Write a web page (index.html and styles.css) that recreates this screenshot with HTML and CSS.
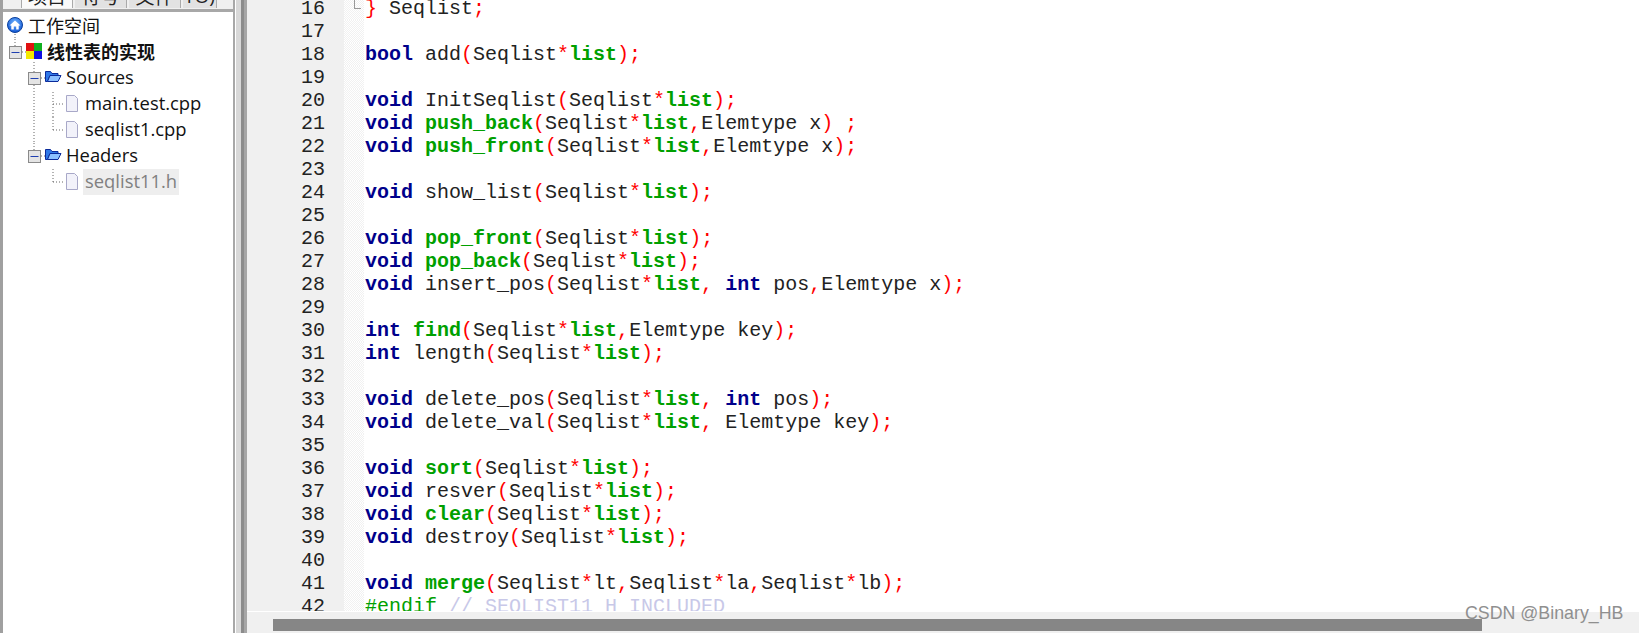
FILE: index.html
```html
<!DOCTYPE html>
<html lang="zh">
<head>
<meta charset="utf-8">
<title>线性表的实现</title>
<link rel="stylesheet" href="styles.css">
</head>
<body>
<div class="app">
  <aside class="side">
    <div class="tabs">
      <span class="tab on">项目</span>
      <span class="tab">符号</span>
      <span class="tab">文件</span>
      <span class="tab last">TO)</span>
    </div>
    <div class="tree">
      <div class="row">
        <svg class="tw w1" viewBox="0 0 28 26">
          <defs>
            <radialGradient id="globe" cx="0.500" cy="0.350" r="0.700">
              <stop offset="0" stop-color="#6fb4ff"/>
              <stop offset="1" stop-color="#0a4fd0"/>
            </radialGradient>
          </defs>
          <circle cx="15" cy="12" r="7.500" fill="url(#globe)" stroke="#0b3f9c"/>
          <path d="M9.500 12.500 15 7.500l5.500 5h-1.800v4h-2.500v-3h-2.400v3h-2.500v-4z" fill="#fff"/>
          <path class="dot" d="M15 21v5"/>
        </svg>
        <span class="lb">工作空间</span>
      </div>
      <div class="row">
        <svg class="tw w2" viewBox="0 0 47 26">
          <path class="dot" d="M15 0v7M22 13h4M34 23v3"/>
          <rect class="box" x="9.500" y="7.500" width="12" height="12"/><path class="minus" d="M11.500 13.500h8"/>
          <rect x="26" y="4" width="8" height="8" fill="#e01010"/><rect x="34" y="4" width="8" height="8" fill="#10b020"/>
          <rect x="26" y="12" width="8" height="8" fill="#f4e800"/><rect x="34" y="12" width="8" height="8" fill="#1010e0"/>
        </svg>
        <span class="lb bold">线性表的实现</span>
      </div>
      <div class="row">
        <svg class="tw w3" viewBox="0 0 66 26">
          <path class="dot" d="M34 0v7M34 20v6M41 13h4"/>
          <rect class="box" x="28.500" y="7.500" width="12" height="12"/><path class="minus" d="M30.500 13.500h8"/>
          <path class="fldb" d="M45.500 16.500v-10h5l1.500 2h6v2h-8l-2.500 6z"/>
          <path class="fld" d="M47.500 16.500l2.500-6h11l-3 6z"/>
        </svg>
        <span class="lb en">Sources</span>
      </div>
      <div class="row">
        <svg class="tw w4" viewBox="0 0 85 26">
          <path class="dot" d="M34 0v26M53 1v25M53 13h11"/>
          <path class="file" d="M66.500 4.500h8l3 3v13h-11z"/>
        </svg>
        <span class="lb en">main.test.cpp</span>
      </div>
      <div class="row">
        <svg class="tw w4" viewBox="0 0 85 26">
          <path class="dot" d="M34 0v26M53 0v13M53 13h11"/>
          <path class="file" d="M66.500 4.500h8l3 3v13h-11z"/>
        </svg>
        <span class="lb en">seqlist1.cpp</span>
      </div>
      <div class="row">
        <svg class="tw w3" viewBox="0 0 66 26">
          <path class="dot" d="M34 0v7M41 13h4"/>
          <rect class="box" x="28.500" y="7.500" width="12" height="12"/><path class="minus" d="M30.500 13.500h8"/>
          <path class="fldb" d="M45.500 16.500v-10h5l1.500 2h6v2h-8l-2.500 6z"/>
          <path class="fld" d="M47.500 16.500l2.500-6h11l-3 6z"/>
        </svg>
        <span class="lb en">Headers</span>
      </div>
      <div class="row">
        <svg class="tw w5" viewBox="0 0 83 26">
          <path class="dot" d="M53 0v13M53 13h11"/>
          <path class="file" d="M66.500 4.500h8l3 3v13h-11z"/>
        </svg>
        <span class="lb en sel">seqlist11.h</span>
      </div>
    </div>
  </aside>
  <div class="split"></div>
  <main class="editor">
    <div class="code">
      <div class="line"><span class="num">16</span><span class="fold"><i class="end"></i></span><span class="src"><b class="p">}</b> Seqlist<b class="p">;</b></span></div>
      <div class="line"><span class="num">17</span><span class="fold"></span><span class="src"></span></div>
      <div class="line"><span class="num">18</span><span class="fold"></span><span class="src"><b class="k">bool</b> add<b class="p">(</b>Seqlist<b class="p">*</b><b class="f">list</b><b class="p">);</b></span></div>
      <div class="line"><span class="num">19</span><span class="fold"></span><span class="src"></span></div>
      <div class="line"><span class="num">20</span><span class="fold"></span><span class="src"><b class="k">void</b> InitSeqlist<b class="p">(</b>Seqlist<b class="p">*</b><b class="f">list</b><b class="p">);</b></span></div>
      <div class="line"><span class="num">21</span><span class="fold"></span><span class="src"><b class="k">void</b> <b class="f">push_back</b><b class="p">(</b>Seqlist<b class="p">*</b><b class="f">list</b><b class="p">,</b>Elemtype x<b class="p">) ;</b></span></div>
      <div class="line"><span class="num">22</span><span class="fold"></span><span class="src"><b class="k">void</b> <b class="f">push_front</b><b class="p">(</b>Seqlist<b class="p">*</b><b class="f">list</b><b class="p">,</b>Elemtype x<b class="p">);</b></span></div>
      <div class="line"><span class="num">23</span><span class="fold"></span><span class="src"></span></div>
      <div class="line"><span class="num">24</span><span class="fold"></span><span class="src"><b class="k">void</b> show_list<b class="p">(</b>Seqlist<b class="p">*</b><b class="f">list</b><b class="p">);</b></span></div>
      <div class="line"><span class="num">25</span><span class="fold"></span><span class="src"></span></div>
      <div class="line"><span class="num">26</span><span class="fold"></span><span class="src"><b class="k">void</b> <b class="f">pop_front</b><b class="p">(</b>Seqlist<b class="p">*</b><b class="f">list</b><b class="p">);</b></span></div>
      <div class="line"><span class="num">27</span><span class="fold"></span><span class="src"><b class="k">void</b> <b class="f">pop_back</b><b class="p">(</b>Seqlist<b class="p">*</b><b class="f">list</b><b class="p">);</b></span></div>
      <div class="line"><span class="num">28</span><span class="fold"></span><span class="src"><b class="k">void</b> insert_pos<b class="p">(</b>Seqlist<b class="p">*</b><b class="f">list</b><b class="p">,</b> <b class="k">int</b> pos<b class="p">,</b>Elemtype x<b class="p">);</b></span></div>
      <div class="line"><span class="num">29</span><span class="fold"></span><span class="src"></span></div>
      <div class="line"><span class="num">30</span><span class="fold"></span><span class="src"><b class="k">int</b> <b class="f">find</b><b class="p">(</b>Seqlist<b class="p">*</b><b class="f">list</b><b class="p">,</b>Elemtype key<b class="p">);</b></span></div>
      <div class="line"><span class="num">31</span><span class="fold"></span><span class="src"><b class="k">int</b> length<b class="p">(</b>Seqlist<b class="p">*</b><b class="f">list</b><b class="p">);</b></span></div>
      <div class="line"><span class="num">32</span><span class="fold"></span><span class="src"></span></div>
      <div class="line"><span class="num">33</span><span class="fold"></span><span class="src"><b class="k">void</b> delete_pos<b class="p">(</b>Seqlist<b class="p">*</b><b class="f">list</b><b class="p">,</b> <b class="k">int</b> pos<b class="p">);</b></span></div>
      <div class="line"><span class="num">34</span><span class="fold"></span><span class="src"><b class="k">void</b> delete_val<b class="p">(</b>Seqlist<b class="p">*</b><b class="f">list</b><b class="p">,</b> Elemtype key<b class="p">);</b></span></div>
      <div class="line"><span class="num">35</span><span class="fold"></span><span class="src"></span></div>
      <div class="line"><span class="num">36</span><span class="fold"></span><span class="src"><b class="k">void</b> <b class="f">sort</b><b class="p">(</b>Seqlist<b class="p">*</b><b class="f">list</b><b class="p">);</b></span></div>
      <div class="line"><span class="num">37</span><span class="fold"></span><span class="src"><b class="k">void</b> resver<b class="p">(</b>Seqlist<b class="p">*</b><b class="f">list</b><b class="p">);</b></span></div>
      <div class="line"><span class="num">38</span><span class="fold"></span><span class="src"><b class="k">void</b> <b class="f">clear</b><b class="p">(</b>Seqlist<b class="p">*</b><b class="f">list</b><b class="p">);</b></span></div>
      <div class="line"><span class="num">39</span><span class="fold"></span><span class="src"><b class="k">void</b> destroy<b class="p">(</b>Seqlist<b class="p">*</b><b class="f">list</b><b class="p">);</b></span></div>
      <div class="line"><span class="num">40</span><span class="fold"></span><span class="src"></span></div>
      <div class="line"><span class="num">41</span><span class="fold"></span><span class="src"><b class="k">void</b> <b class="f">merge</b><b class="p">(</b>Seqlist<b class="p">*</b>lt<b class="p">,</b>Seqlist<b class="p">*</b>la<b class="p">,</b>Seqlist<b class="p">*</b>lb<b class="p">);</b></span></div>
      <div class="line"><span class="num">42</span><span class="fold"></span><span class="src"><span class="pre">#endif</span> <span class="cm">// SEQLIST11_H_INCLUDED</span></span></div>
    </div>
    <div class="hbar"><div class="thumb"></div></div>
  </main>
  <div class="mark">CSDN @Binary_HB</div>
</div>
</body>
</html>
```

FILE: styles.css
```css
* { box-sizing: border-box; }
html, body { margin: 0; height: 100%; overflow: hidden; background: #fff; }
.app { position: relative; display: flex; width: 1639px; height: 633px; overflow: hidden; }

.side { width: 233px; flex: none; border-left: 3px solid #a0a0a0; background: #fff; display: flex; flex-direction: column; }
.tabs { height: 12px; flex: none; display: flex; align-items: flex-start; gap: 2px; padding: 0 16px 0 18px; background: #f0f0f0; border-bottom: 3px solid #a8a8a8; }
.tab { width: 52px; height: 8px; padding-bottom: 4px; background: #e2e2e2; font: 19px/16px "Noto Sans CJK SC", sans-serif; color: #222; overflow: hidden; display: flex; align-items: flex-end; justify-content: center; border-right: 1px solid #aaa; }
.tab.on { background: #fafafa; border-left: 1px solid #aaa; }
.tab.last { width: 34px; font-family: "Open Sans", sans-serif; }

.tree { font: 18px/26px "Open Sans", "Noto Sans CJK SC", sans-serif; color: #111; margin-left: -3px; padding-top: 1px; }
.row { display: flex; height: 26px; align-items: flex-start; }
.tw { height: 26px; flex: none; overflow: visible; }
.w1 { width: 28px; }
.w2 { width: 47px; }
.w3 { width: 66px; }
.w4 { width: 85px; }
.w5 { width: 83px; }
.lb { white-space: nowrap; }
.en { font-size: 18.400px; line-height: 24px; }
.bold { font-weight: 700; }
.sel { background: #eeeeee; color: #808080; padding: 0 2px; width: 96px; height: 26px; }
.dot { fill: none; stroke: #666; stroke-width: 1; stroke-dasharray: 1 2; }
.box { fill: #e4e4e4; stroke: #8a8a8a; }
.minus { stroke: #1f3fb0; stroke-width: 1; fill: none; }
.fldb { fill: #2f78e8; stroke: #0a2a9a; stroke-width: 1; }
.fld { fill: #8cc0ff; stroke: #0a2a9a; stroke-width: 1; }
.file { fill: #f2f2fa; stroke: #a8a8c8; }

.split { width: 14px; flex: none; background: linear-gradient(90deg, #a8a8a8 0 2px, #fff 2px 3px, #d8d8d8 3px 8px, #8c8c8c 8px 11px, #a6a6a6 11px 14px); }

.editor { flex: 1; min-width: 0; display: flex; flex-direction: column; }
.code { flex: 1; min-height: 0; overflow: hidden; font: 20px/23px "Liberation Mono", monospace; color: #222; background: #fff; border-bottom: 1px solid #fff; }
.line { display: flex; height: 23px; }
.line:first-child { margin-top: -3px; }
.num { width: 97px; flex: none; background: #f0f0f0; text-align: right; padding-right: 19px; }
.fold { width: 20px; flex: none; position: relative; background: repeating-conic-gradient(#f1f1f1 0 25%, #fff 0 50%) 0 0 / 2px 2px; }
.end { position: absolute; left: 10px; top: 2px; width: 7px; height: 10px; border-left: 1px solid #999; border-bottom: 1px solid #999; }
.src { white-space: pre; padding-left: 1px; }
.k { color: #00008b; font-weight: 700; }
.f { color: #00a000; font-weight: 700; }
.p { color: #ff0000; font-weight: 400; }
.pre { color: #00a000; }
.cm { color: #c8c8e8; }

.hbar { height: 21px; flex: none; background: #f0f0f0; padding: 7px 0 2px 26px; }
.thumb { width: 1209px; height: 12px; background: #868686; }

.mark { position: absolute; left: 1465px; top: 602px; font: 17.800px/22px "Liberation Sans", sans-serif; color: #8f8f8f; white-space: nowrap; }
```
